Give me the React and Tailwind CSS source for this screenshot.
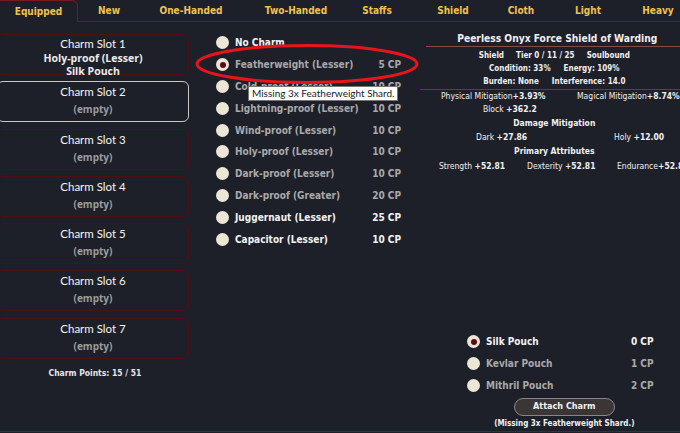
import React from 'react';

const tahoma = { fontFamily: '"DejaVu Sans Condensed", "DejaVu Sans", sans-serif' };

const tabs = [
  { label: 'Equipped', w: 'w-[78px]', active: true },
  { label: 'New', w: 'w-[62px]' },
  { label: 'One-Handed', w: 'w-[102px]' },
  { label: 'Two-Handed', w: 'w-[108px]' },
  { label: 'Staffs', w: 'w-[54px]' },
  { label: 'Shield', w: 'w-[98px]' },
  { label: 'Cloth', w: 'w-[38px]' },
  { label: 'Light', w: 'w-[96px]' },
  { label: 'Heavy', w: 'w-[44px]' },
];

const slots = [
  { name: 'Charm Slot 1', lines: ['Holy-proof (Lesser)', 'Silk Pouch'] },
  { name: 'Charm Slot 2', selected: true },
  { name: 'Charm Slot 3' },
  { name: 'Charm Slot 4' },
  { name: 'Charm Slot 5' },
  { name: 'Charm Slot 6' },
  { name: 'Charm Slot 7' },
];

const charms = [
  { name: 'No Charm', cp: '', bright: true },
  { name: 'Featherweight (Lesser)', cp: '5 CP', checked: true },
  { name: 'Cold-proof (Lesser)', cp: '10 CP' },
  { name: 'Lightning-proof (Lesser)', cp: '10 CP' },
  { name: 'Wind-proof (Lesser)', cp: '10 CP' },
  { name: 'Holy-proof (Lesser)', cp: '10 CP' },
  { name: 'Dark-proof (Lesser)', cp: '10 CP' },
  { name: 'Dark-proof (Greater)', cp: '20 CP' },
  { name: 'Juggernaut (Lesser)', cp: '25 CP', bright: true },
  { name: 'Capacitor (Lesser)', cp: '10 CP', bright: true },
];

const pouches = [
  { name: 'Silk Pouch', cp: '0 CP', checked: true, bright: true },
  { name: 'Kevlar Pouch', cp: '1 CP' },
  { name: 'Mithril Pouch', cp: '2 CP' },
];

function Radio({ checked }) {
  return (
    <span className="w-[13px] h-[13px] rounded-full bg-[#ece6d6] flex items-center justify-center shrink-0">
      {checked && <span className="w-[6px] h-[6px] rounded-full bg-[#5c0b12]" />}
    </span>
  );
}

function OptionRow({ item, cpWidth }) {
  const color = item.bright ? 'text-[#f2f2f2]' : 'text-[#a9a9a9]';
  return (
    <div className="flex items-center h-[21.8px]">
      <Radio checked={item.checked} />
      <span className={`ml-[6px] text-[10px] font-bold ${color}`}>{item.name}</span>
      <span className={`ml-auto ${cpWidth} text-right text-[10px] font-bold ${color}`}>{item.cp}</span>
    </div>
  );
}

export default function App() {
  return (
    <div className="relative w-[680px] h-[433px] overflow-hidden bg-[#1e2029] text-[#f0f0f0]" style={tahoma}>
      {/* Onglets */}
      <div className="flex h-[22px]">
        {tabs.map((t) => (
          <div
            key={t.label}
            className={`${t.w} shrink-0 flex items-center justify-center text-[10px] font-bold text-[#f1c24b] ${
              t.active
                ? 'border-t border-r border-[#7a1820] rounded-tr-[6px]'
                : 'border-b border-[#6e1a20]'
            }`}
          >
            {t.label}
          </div>
        ))}
        <div className="flex-1 border-b border-[#6e1a20]" />
      </div>

      <div className="flex h-[410px] border-b border-[#6e1a20]">
        {/* Emplacements */}
        <div className="w-[190px] shrink-0 pt-3 flex flex-col gap-[6.3px]">
          {slots.map((s) => (
            <div
              key={s.name}
              className={`-ml-[3px] w-[192px] h-[41px] rounded-[6px] border flex flex-col items-center ${
                s.selected ? 'border-[#c9c9c9]' : 'border-[#4e0f15]'
              } ${s.lines ? 'pt-[1px]' : 'pt-[2px]'}`}
            >
              <span className="text-[11.5px] leading-[15px] text-[#f4f4f4]" style={{ fontFamily: 'Lato, sans-serif' }}>{s.name}</span>
              {s.lines ? (
                <>
                  <span className="mt-[1px] text-[10.5px] leading-[12.5px] font-bold text-[#ececec]" style={{ fontFamily: '"Open Sans", sans-serif' }}>{s.lines[0]}</span>
                  <span className="text-[10.5px] leading-[12px] font-bold text-[#ececec]" style={{ fontFamily: '"Open Sans", sans-serif' }}>{s.lines[1]}</span>
                </>
              ) : (
                <span className="mt-[3px] text-[10px] leading-[14px] font-bold text-[#9c9c9c]" style={{ fontFamily: '"Open Sans", sans-serif' }}>(empty)</span>
              )}
            </div>
          ))}
          <div className="mt-[2px] text-center text-[8.5px] font-bold text-[#e6e6e6]">Charm Points: 15 / 51</div>
        </div>

        {/* Liste de charmes */}
        <div className="ml-[26px] w-[185px] shrink-0 pt-[10px] flex flex-col">
          {charms.map((c) => (
            <OptionRow key={c.name} item={c} cpWidth="w-[40px]" />
          ))}
        </div>

        {/* Détails de l'objet */}
        <div className="ml-[19px] flex-1 flex flex-col pt-[10px]">
          <div className="ml-[6px] text-center text-[10.2px] leading-[13px] font-bold pb-[1px] border-b border-[#8a4a4a]">
            Peerless Onyx Force Shield of Warding
          </div>
          <div className="flex flex-col items-center text-[8px] font-bold leading-[13px] pt-[2px] pb-[1px] border-b border-[#8e2a2e]">
            <div className="flex gap-[12px]"><span>Shield</span><span>Tier 0 / 11 / 25</span><span>Soulbound</span></div>
            <div className="flex gap-[13px]"><span>Condition: 33%</span><span>Energy: 109%</span></div>
            <div className="flex gap-[13px]"><span>Burden: None</span><span>Interference: 14.0</span></div>
          </div>
          <div className="-mt-[1px] text-[8.5px] leading-[14px] whitespace-nowrap">
            <div className="flex">
              <span className="pl-[21px] w-[157px]">Physical Mitigation<b>+3.93%</b></span>
              <span>Magical Mitigation<b>+8.74%</b></span>
            </div>
            <div className="pl-[63px] leading-[13px]">Block <b>+362.2</b></div>
            <div className="text-center font-bold">Damage Mitigation</div>
            <div className="flex">
              <span className="pl-[56px] w-[194px]">Dark <b>+27.86</b></span>
              <span>Holy <b>+12.00</b></span>
            </div>
            <div className="text-center font-bold leading-[15px]">Primary Attributes</div>
            <div className="flex">
              <span className="pl-[19px] w-[107px]">Strength <b>+52.81</b></span>
              <span className="w-[90px]">Dexterity <b>+52.81</b></span>
              <span>Endurance<b>+52.81</b></span>
            </div>
          </div>

          <div className="mt-auto pl-[47px] pr-[35px] flex flex-col">
            {pouches.map((p) => (
              <OptionRow key={p.name} item={p} cpWidth="w-[40px]" />
            ))}
          </div>
          <div className="flex justify-center pl-[20px] mt-[2px]">
            <button className="w-[101px] h-[18px] rounded-full bg-[#3a3636] border border-[#8d8484] text-[9px] font-bold text-[#f2f2f2]">
              Attach Charm
            </button>
          </div>
          <div className="pl-[20px] text-center text-[8px] leading-[12px] font-bold mt-[2px] mb-[1px]">(Missing 3x Featherweight Shard.)</div>
        </div>
      </div>

      {/* Annotation rouge */}
      <svg className="absolute left-[194px] top-[43px]" width="226" height="42" viewBox="0 0 226 42">
        <ellipse cx="113" cy="21" rx="110" ry="18.5" fill="none" stroke="#e8141c" strokeWidth="3" />
      </svg>

      {/* Infobulle */}
      <div
        className="absolute left-[248px] top-[86px] h-[15px] px-[3px] flex items-center bg-white border border-[#767676] text-[10px] text-[#1a1a1a]"
        style={{ fontFamily: 'Lato, sans-serif' }}
      >
        Missing 3x Featherweight Shard.
      </div>
    </div>
  );
}
